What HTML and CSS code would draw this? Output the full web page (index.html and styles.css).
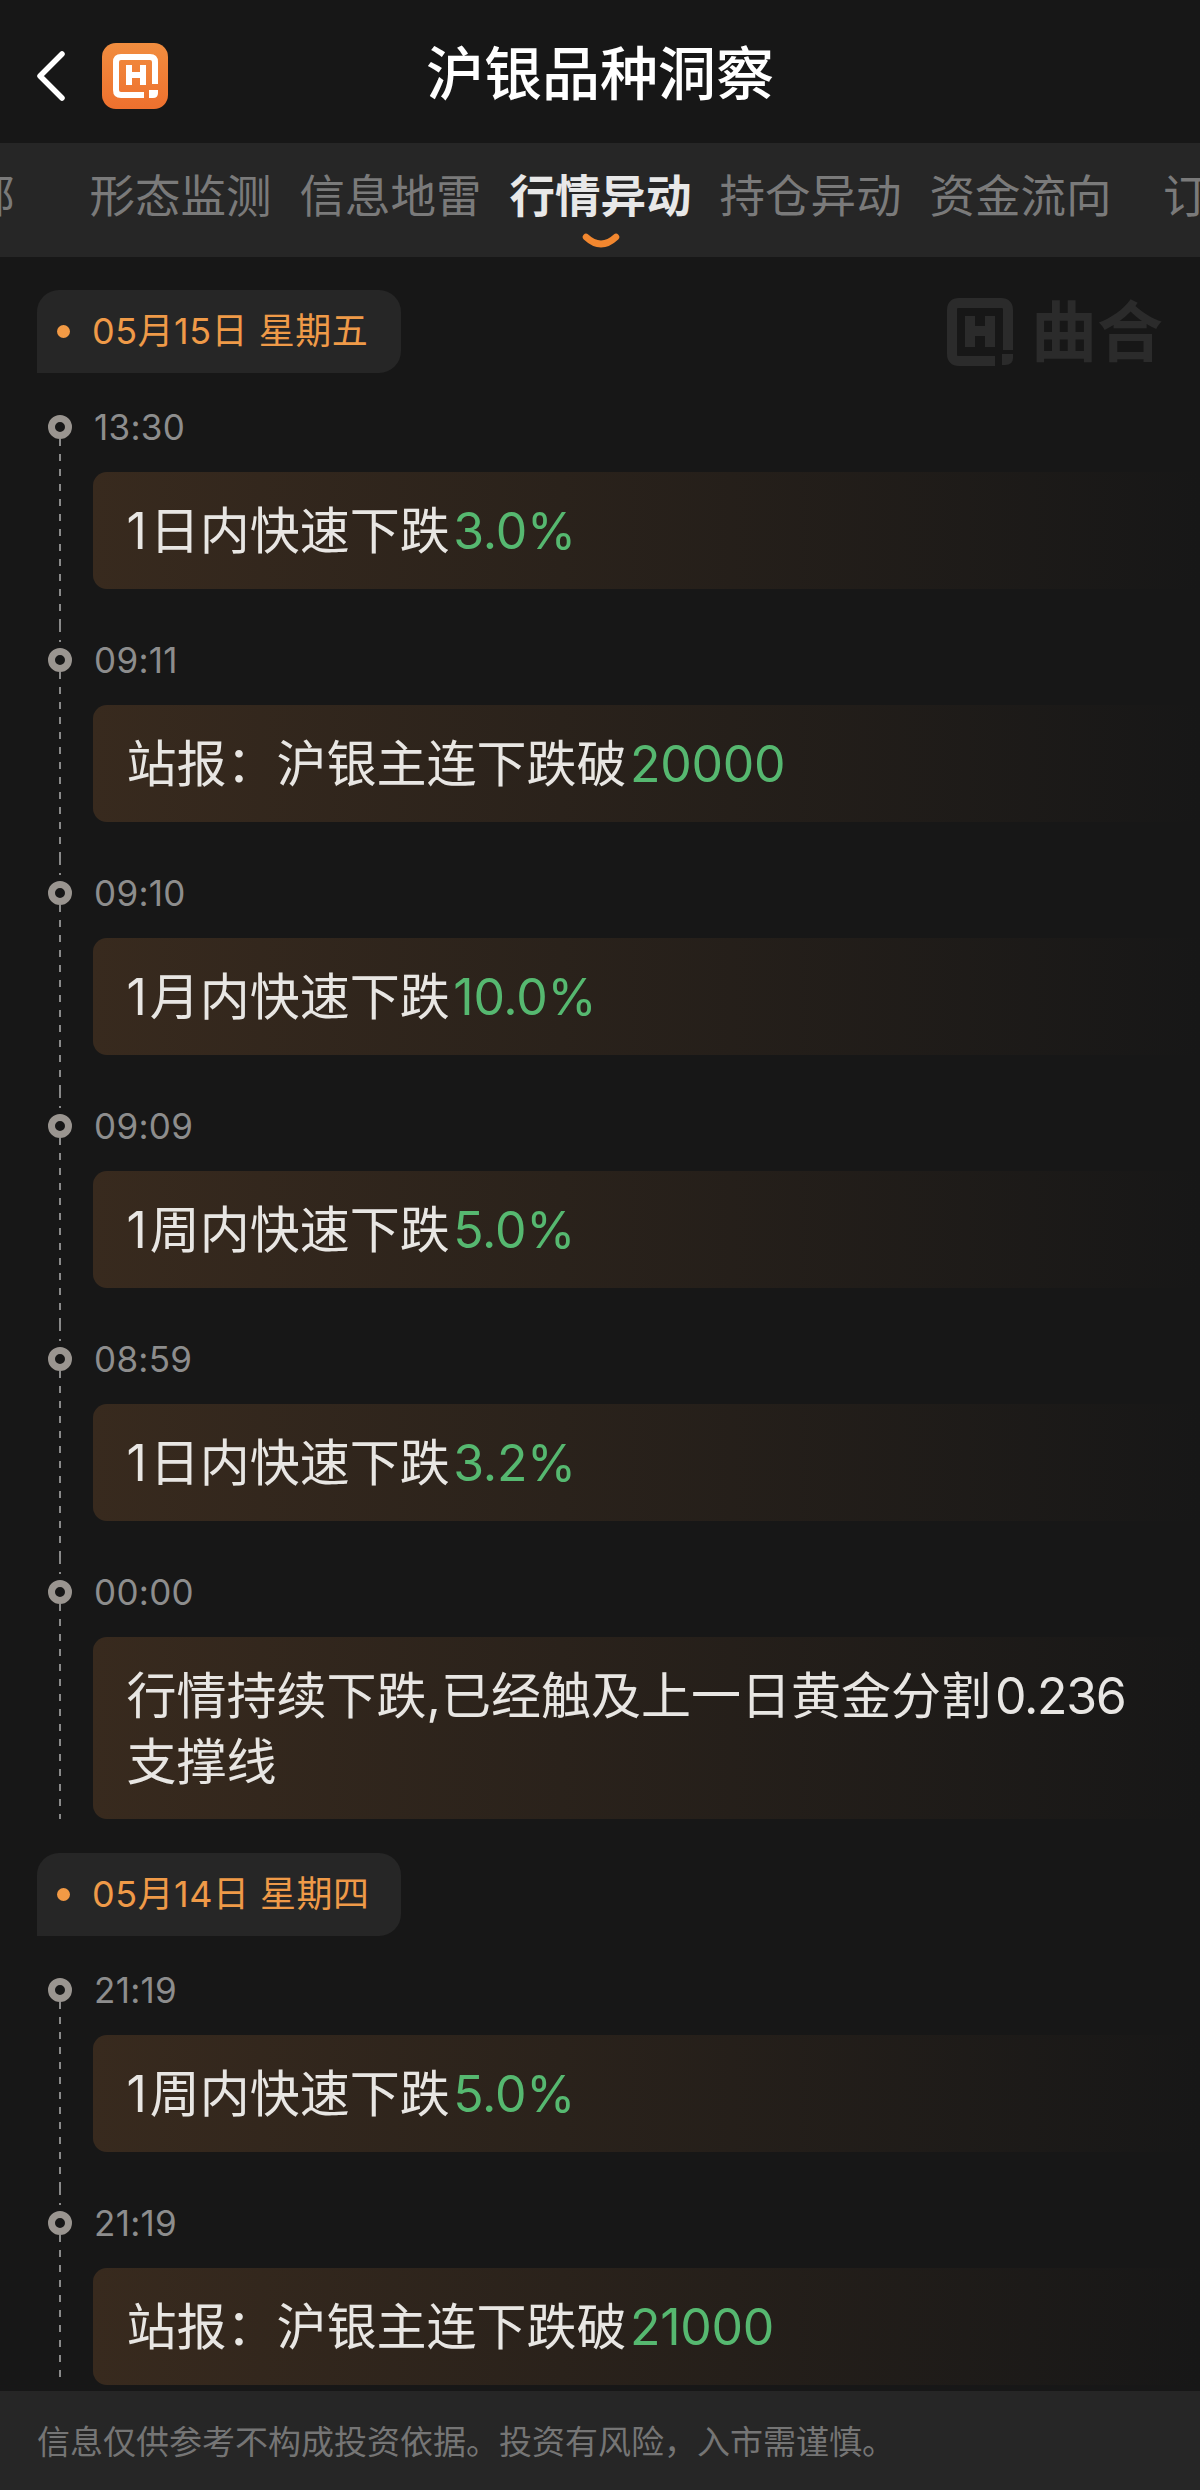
FILE: index.html
```html
<!DOCTYPE html>
<html lang="zh-CN">
<head>
<meta charset="utf-8">
<title>沪银品种洞察</title>
<link rel="stylesheet" href="styles.css">
</head>
<body>
<div class="page">
  <header class="header">
    <div class="header-left">
      <svg class="back" viewBox="0 0 34 54" width="34" height="54"><path d="M28 5 L6 27 L28 49" fill="none" stroke="#fff" stroke-width="5.5" stroke-linecap="round" stroke-linejoin="round"/></svg>
      <svg class="logo" viewBox="0 0 66 66" width="66" height="66">
        <defs><linearGradient id="lg" x1="0" y1="0" x2="0" y2="1"><stop offset="0" stop-color="#f18d3f"/><stop offset="1" stop-color="#ee702e"/></linearGradient></defs>
        <rect width="66" height="66" rx="14" fill="url(#lg)"/>
        <path d="M53 41 V19 Q53 14 48 14 H19 Q14 14 14 19 V47 Q14 52 19 52 H42" fill="none" stroke="#fff" stroke-width="6"/>
        <path d="M27 22 V42 M41 22 V42 M27 32 H41" fill="none" stroke="#fff" stroke-width="6"/>
        <path d="M47 47 H56 V50 Q56 55 51 55 H47 Z" fill="#fff"/>
      </svg>
    </div>
    <h1 class="title">沪银品种洞察</h1>
    <div></div>
  </header>

  <nav class="tabs">
    <span class="tab tab-first">全部</span>
    <span class="tab">形态监测</span>
    <span class="tab">信息地雷</span>
    <span class="tab tab-active">行情异动
      <svg class="smile" viewBox="0 0 38 16" width="38" height="16"><path d="M4 4 Q19 18 34 4" fill="none" stroke="#f2872f" stroke-width="6.5" stroke-linecap="round"/></svg>
    </span>
    <span class="tab">持仓异动</span>
    <span class="tab tab-before-last">资金流向</span>
    <span class="tab">订阅</span>
  </nav>

  <main class="feed">
    <div class="watermark">
      <svg viewBox="0 0 66 68" width="66" height="68">
        <path d="M61 52 V12 Q61 5 54 5 H12 Q5 5 5 12 V56 Q5 63 12 63 H48" fill="none" stroke="#2b2b2b" stroke-width="10"/>
        <path d="M23 18 V49 M43 18 V49 M23 33 H43" fill="none" stroke="#2b2b2b" stroke-width="10"/>
        <path d="M55 56 H66 V60 Q66 67 58 67 H55 Z" fill="#2b2b2b"/>
      </svg>
      <span class="watermark-text">曲合</span>
    </div>

    <section class="day">
      <div class="date"><i class="date-dot"></i><span class="date-text">05月15日 星期五</span></div>

      <article class="item">
        <div class="rail"><i class="stub"></i><i class="ring"></i><i class="dash"></i></div>
        <div class="body"><div class="time">13:30</div><div class="card"><span class="lead">1</span>日内快速下跌<span class="down">3.0%</span></div></div>
      </article>
      <article class="item">
        <div class="rail"><i class="stub"></i><i class="ring"></i><i class="dash"></i></div>
        <div class="body"><div class="time">09:11</div><div class="card">站报：沪银主连下跌破<span class="down">20000</span></div></div>
      </article>
      <article class="item">
        <div class="rail"><i class="stub"></i><i class="ring"></i><i class="dash"></i></div>
        <div class="body"><div class="time">09:10</div><div class="card"><span class="lead">1</span>月内快速下跌<span class="down">10.0%</span></div></div>
      </article>
      <article class="item">
        <div class="rail"><i class="stub"></i><i class="ring"></i><i class="dash"></i></div>
        <div class="body"><div class="time">09:09</div><div class="card"><span class="lead">1</span>周内快速下跌<span class="down">5.0%</span></div></div>
      </article>
      <article class="item">
        <div class="rail"><i class="stub"></i><i class="ring"></i><i class="dash"></i></div>
        <div class="body"><div class="time">08:59</div><div class="card"><span class="lead">1</span>日内快速下跌<span class="down">3.2%</span></div></div>
      </article>
      <article class="item">
        <div class="rail"><i class="stub"></i><i class="ring"></i><i class="dash"></i></div>
        <div class="body"><div class="time">00:00</div><div class="card">行情持续下跌,已经触及上一日黄金分割<span class="ratio">0.236</span>支撑线</div></div>
      </article>
    </section>

    <section class="day">
      <div class="date"><i class="date-dot"></i><span class="date-text">05月14日 星期四</span></div>

      <article class="item">
        <div class="rail"><i class="stub"></i><i class="ring"></i><i class="dash"></i></div>
        <div class="body"><div class="time">21:19</div><div class="card"><span class="lead">1</span>周内快速下跌<span class="down">5.0%</span></div></div>
      </article>
      <article class="item">
        <div class="rail"><i class="stub"></i><i class="ring"></i><i class="dash"></i></div>
        <div class="body"><div class="time">21:19</div><div class="card">站报：沪银主连下跌破<span class="down">21000</span></div></div>
      </article>
    </section>
  </main>

  <footer class="footer">信息仅供参考不构成投资依据。投资有风险，入市需谨慎。</footer>
</div>
</body>
</html>
```

FILE: styles.css
```css
* { box-sizing: border-box; }
html, body { margin: 0; padding: 0; background: #171717; }
body { font-family: Inter, "Noto Sans CJK SC", sans-serif; color: #e8e6e3; }
.page { position: relative; width: 1200px; height: 2490px; overflow: hidden; background: #171717; }

.header { height: 143px; display: grid; grid-template-columns: 1fr auto 1fr; align-items: center; }
.header-left { display: flex; align-items: center; padding-left: 34px; gap: 34px; padding-top: 8px; }
.back { display: block; }
.logo { display: block; }
.title { margin: 0; font-size: 58px; line-height: 70px; font-weight: 500; color: #fff; padding-top: 4px; }

.tabs { height: 114px; background: #262626; display: flex; align-items: flex-start; gap: 28px; padding-top: 24px; overflow: hidden; white-space: nowrap; }
.tab { flex: none; display: flex; flex-direction: column; align-items: center; font-size: 45.5px; line-height: 60px; color: #7a7a7a; }
.tab-first { margin-left: -76px; margin-right: 46.5px; }
.tab-before-last { margin-right: 23.5px; }
.tab-active { color: #e8e8e8; font-weight: 700; }
.smile { display: block; margin-top: 6px; }

.feed { position: relative; padding-top: 33px; }
.watermark { position: absolute; top: 41px; left: 947px; display: flex; align-items: center; gap: 18px; }
.watermark svg { display: block; }
.watermark-text { font-size: 66px; line-height: 68px; font-weight: 700; color: #2b2b2b; }

.day { margin-bottom: 34px; }
.date { width: 364px; height: 83px; margin-left: 37px; margin-bottom: 19px; background: #262626; border-radius: 22px 22px 22px 0; display: flex; align-items: center; gap: 22px; padding-left: 20px; color: #ef9a48; font-size: 36px; white-space: nowrap; }
.date-text { letter-spacing: 0.5px; margin-bottom: 8px; }
.date-dot { width: 13px; height: 13px; border-radius: 50%; background: #f29a45; flex: none; }

.item { display: grid; grid-template-columns: 93px 1fr; }
.rail { display: flex; flex-direction: column; align-items: center; width: 93px; padding-left: 48px; padding-right: 21px; }
.stub { display: block; width: 2px; height: 17px; flex: none; margin-bottom: 6px; background: repeating-linear-gradient(to bottom, #888 0 7px, transparent 7px 15px); }
.item:first-of-type .stub { visibility: hidden; }
.ring { display: block; width: 24px; height: 24px; flex: none; border-radius: 50%; border: 7px solid #9a9590; }
.dash { display: block; width: 2px; flex: 1; background: repeating-linear-gradient(to bottom, #8a8a8a 0 7px, transparent 7px 15px); }

.body { padding-bottom: 36px; }
.item:last-child .body { padding-bottom: 0; }
.time { height: 70px; line-height: 70px; margin-bottom: 10px; padding-left: 1px; font-size: 35px; letter-spacing: 0.3px; color: #8d8d8d; }
.card { min-height: 117px; padding: 26px 40px 24px 33.5px; border-radius: 14px 0 0 14px; background: linear-gradient(to right, #382a1e, #171717); font-size: 50px; line-height: 66px; color: #e8e6e3; }
.lead { margin-right: 3px; }
.down { margin-left: 3.5px; color: #56b870; letter-spacing: -0.3px; }
.ratio { margin-left: 4px; letter-spacing: -1.3px; }

.footer { position: absolute; left: 0; right: 0; bottom: 0; height: 99px; background: #262626; padding: 29px 0 0 37px; font-size: 33px; line-height: 44px; color: #757575; white-space: nowrap; }
```
